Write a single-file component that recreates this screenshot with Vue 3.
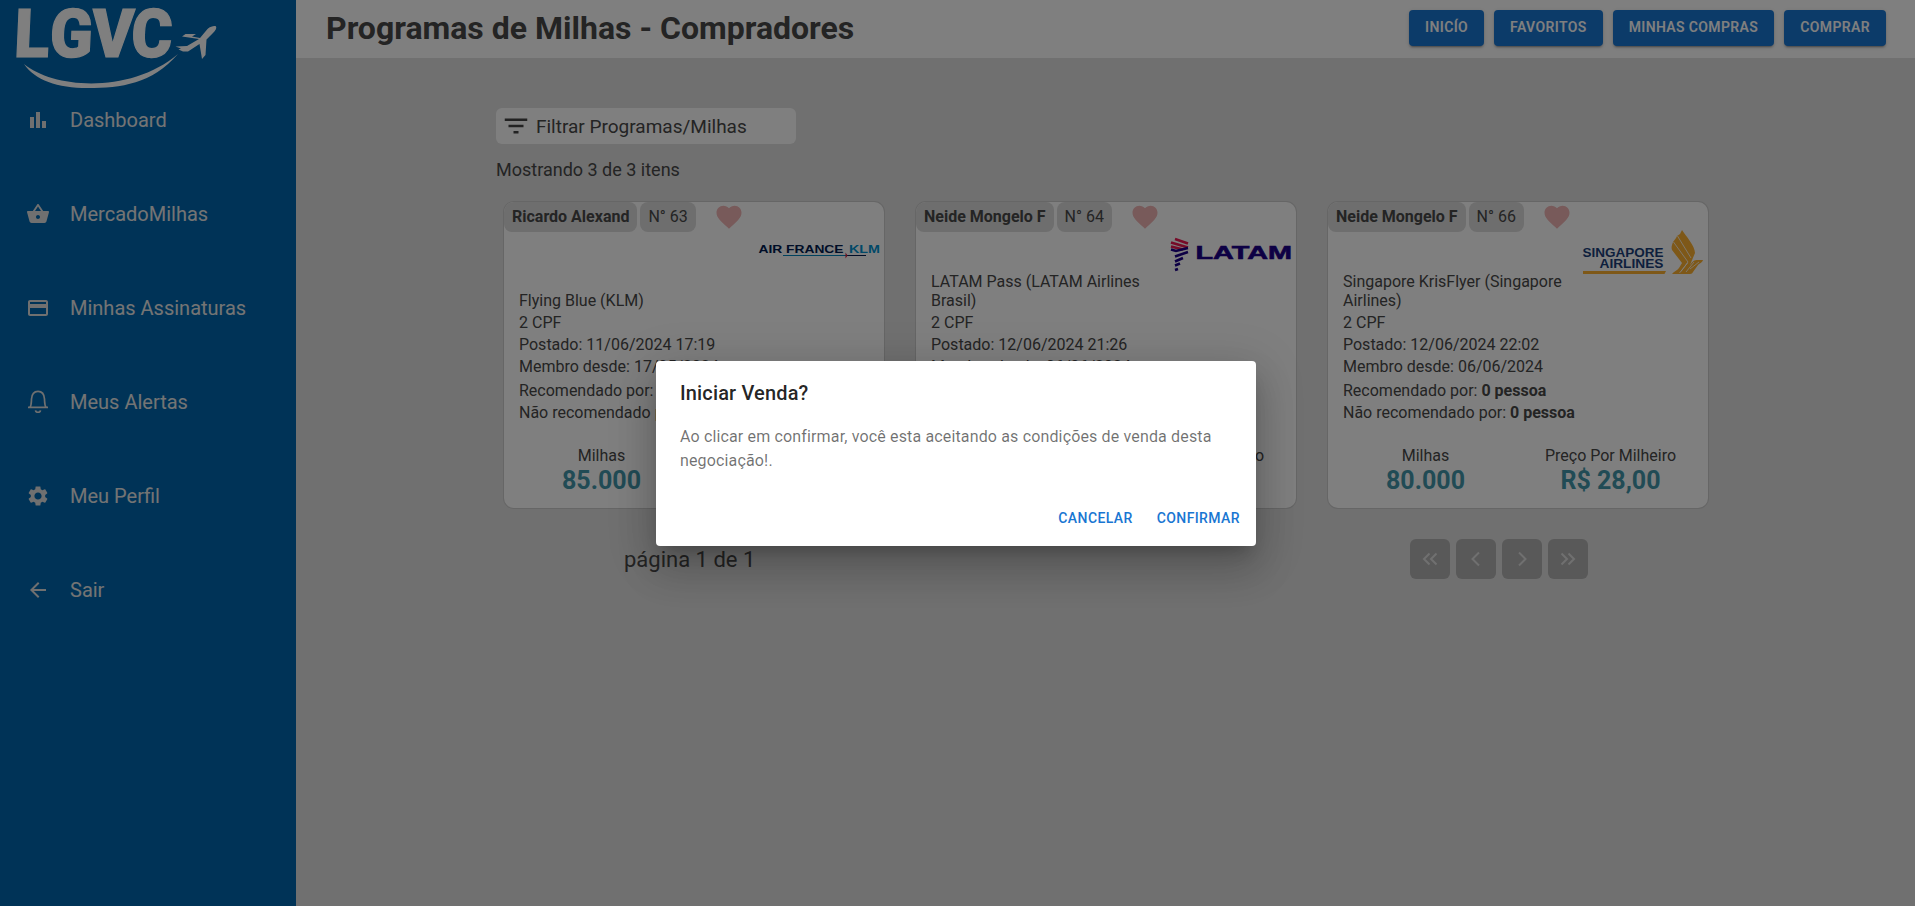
<script setup>
const menu = [
  { label: 'Dashboard', paths: ['M4 9h4v11H4zM16 13h4v7h-4zM10 4h4v16h-4z'] },
  { label: 'MercadoMilhas', paths: ['M17.21 9l-4.38-6.56c-.19-.28-.51-.42-.83-.42-.32 0-.64.14-.83.43L6.79 9H2c-.55 0-1 .45-1 1 0 .09.01.18.04.27l2.54 9.27c.23.84 1 1.46 1.92 1.46h13c.92 0 1.69-.62 1.93-1.46l2.54-9.27L23 10c0-.55-.45-1-1-1h-4.79zM9 9l3-4.4L15 9H9zm3 8c-1.100 0-2-.9-2-2s.9-2 2-2 2 .9 2 2-.9 2-2 2z'] },
  { label: 'Minhas Assinaturas', paths: ['M20 4H4c-1.110 0-1.990.890-1.990 2L2 18c0 1.110.890 2 2 2h16c1.110 0 2-.890 2-2V6c0-1.110-.890-2-2-2zm0 14H4v-6h16v6zm0-10H4V6h16v2z'] },
  { label: 'Meus Alertas', line: true, paths: ['M2 17.300h20M4 17.300c1.500-2 1.300-4.500 1.500-8.300.3-4.700 2.700-7.700 6.500-7.700s6.200 3 6.500 7.700c.2 3.800 0 6.300 1.500 8.300M9.500 20.300c.5 2.600 4.500 2.600 5 0'] },
  { label: 'Meu Perfil', paths: ['M19.140 12.940c.04-.3.060-.61.060-.94 0-.32-.02-.64-.07-.94l2.030-1.580c.18-.14.23-.41.12-.61l-1.920-3.320c-.12-.22-.37-.29-.59-.22l-2.390.96c-.5-.38-1.030-.7-1.620-.94l-.36-2.540c-.04-.24-.24-.41-.48-.41h-3.840c-.24 0-.43.17-.47.41l-.36 2.540c-.59.24-1.130.57-1.620.94l-2.390-.96c-.22-.08-.47 0-.59.22L2.740 8.870c-.12.21-.08.47.12.61l2.030 1.580c-.05.3-.09.63-.09.94s.02.64.07.94l-2.030 1.580c-.18.14-.23.41-.12.61l1.920 3.320c.12.22.37.29.59.22l2.390-.96c.5.38 1.030.7 1.620.94l.36 2.540c.05.24.24.41.48.41h3.840c.24 0 .44-.17.47-.41l.36-2.540c.59-.24 1.130-.56 1.620-.94l2.390.96c.22.08.47 0 .59-.22l1.920-3.320c.12-.22.07-.47-.12-.61l-2.010-1.580zM12 15.600c-1.980 0-3.600-1.620-3.600-3.600s1.620-3.600 3.600-3.600 3.600 1.620 3.600 3.600-1.620 3.600-3.600 3.600z'] },
  { label: 'Sair', paths: ['M20 11H7.830l5.590-5.590L12 4l-8 8 8 8 1.410-1.410L7.830 13H20v-2z'] },
]
const actions = ['INICÍO', 'FAVORITOS', 'MINHAS COMPRAS', 'COMPRAR']
const cards = [
  { logo: 'klm', owner: 'Ricardo Alexand', id: 63, program: 'Flying Blue (KLM)', posted: '11/06/2024 17:19', since: '17/05/2024', miles: '85.000', price: 'R$ 27,00' },
  { logo: 'latam', owner: 'Neide Mongelo F', id: 64, program: 'LATAM Pass (LATAM Airlines Brasil)', posted: '12/06/2024 21:26', since: '06/06/2024', miles: '90.000', price: 'R$ 27,00' },
  { logo: 'singapore', owner: 'Neide Mongelo F', id: 66, program: 'Singapore KrisFlyer (Singapore Airlines)', posted: '12/06/2024 22:02', since: '06/06/2024', miles: '80.000', price: 'R$ 28,00' },
]
const pages = [
  'M11.500 6.500L6 12l5.500 5.500M18.500 6.500L13 12l5.500 5.500',
  'M15 5.500L8.500 12l6.500 6.500',
  'M9 5.500l6.500 6.500L9 18.500',
  'M5.500 6.500L11 12l-5.500 5.500M12.500 6.500L18 12l-5.500 5.500',
]
</script>

<template>
  <div class="app">
    <aside class="sidebar">
      <svg class="brand" width="296" height="92" viewBox="0 0 296 92">
        <g class="brand-name" transform="translate(0 56.500) skewX(-2.500)">
          <text x="13.500" y="0" textLength="35" lengthAdjust="spacingAndGlyphs">L</text>
          <text x="49" y="0" textLength="43" lengthAdjust="spacingAndGlyphs">G</text>
          <text x="91" y="0" textLength="42" lengthAdjust="spacingAndGlyphs">V</text>
          <text x="130.500" y="0" textLength="41" lengthAdjust="spacingAndGlyphs">C</text>
        </g>
        <path d="M24 64C54 89 131 94 178 54C152 84 121 88 88 88C57 88 35 80 24 64Z" />
        <path d="M175.500 46.500L187 46L199 39L182 36.500L185.500 34L196 34L192 36.500L200 38L207.500 29C211 26 215 25.500 216 26.500C217 28.500 215 31 213 33L206.500 39.500L205.500 55L202 59L199.500 44L188 51.500L183 51.500L178.500 49.500L181 48.500Z" />
      </svg>
      <nav class="menu">
        <a v-for="item in menu" :key="item.label" class="menu-item">
          <svg :class="{ line: item.line }" width="24" height="24" viewBox="0 0 24 24"><path v-for="p in item.paths" :key="p" :d="p" /></svg>
          <span>{{ item.label }}</span>
        </a>
      </nav>
    </aside>

    <div class="page">
      <header class="topbar">
        <h1>Programas de Milhas - Compradores</h1>
        <div class="actions"><button v-for="a in actions" :key="a">{{ a }}</button></div>
      </header>

      <main class="content">
        <div class="filter">
          <svg width="30" height="30" viewBox="0 0 24 24"><path d="M10 18h4v-2h-4v2zM3 6v2h18V6H3zm3 7h12v-2H6v2z" /></svg>
          <span>Filtrar Programas/Milhas</span>
        </div>
        <p class="count">Mostrando 3 de 3 itens</p>

        <div class="cards">
          <article v-for="c in cards" :key="c.id" class="card">
            <div class="tags">
              <b class="tag">{{ c.owner }}</b>
              <span class="tag">N° {{ c.id }}</span>
              <svg class="heart" width="30" height="30" viewBox="0 0 24 24"><path d="M12 21.350l-1.450-1.320C5.400 15.360 2 12.280 2 8.500 2 5.420 4.420 3 7.500 3c1.740 0 3.410.810 4.500 2.090C13.090 3.810 14.760 3 16.500 3 19.580 3 22 5.420 22 8.500c0 3.780-3.400 6.860-8.550 11.540L12 21.350z" /></svg>
            </div>
            <div class="program">
              <p>{{ c.program }}</p>
              <svg v-if="c.logo === 'klm'" class="logo" width="130" height="50" viewBox="0 0 130 50">
                <g class="klm" font-size="10.800">
                  <text x="6.500" y="23.500" textLength="85" lengthAdjust="spacingAndGlyphs" fill="#001a4f">AIR FRANCE</text>
                  <text x="97" y="23.500" textLength="31" lengthAdjust="spacingAndGlyphs" fill="#0092d0">KLM</text>
                </g>
                <path d="M31 26.500h64" stroke="#0084bd" stroke-width="1" /><path d="M95 26.500h19" stroke="#001a4f" stroke-width="1" />
                <path d="M93.500 23.500l2 3-2 3z" fill="#d01838" />
              </svg>
              <svg v-else-if="c.logo === 'latam'" class="logo" width="130" height="50" viewBox="0 0 130 50">
                <g fill="none" stroke-width="2.600">
                  <path d="M11 10l13 4.500M7 13.500l17 5M7 17.500l12 3" stroke="#ed1650" />
                  <path d="M7 20.500l5 1.500L24 19M11 27.500l13-4.500M11 32.500l8-3.500M11 36.500l5-2M11 41l3-1" stroke="#1b0088" />
                </g>
                <text class="latam" x="31.500" y="30" textLength="96.500" lengthAdjust="spacingAndGlyphs" font-size="19">LATAM</text>
              </svg>
              <svg v-else class="logo" width="130" height="50" viewBox="0 0 130 50">
                <g class="singapore" font-size="13">
                  <text x="6.500" y="27.500" textLength="81" lengthAdjust="spacingAndGlyphs">SINGAPORE</text>
                  <text x="23.500" y="39.200" textLength="64" lengthAdjust="spacingAndGlyphs">AIRLINES</text>
                </g>
                <path d="M7 42h83l-1.500 3H7z" fill="#fcb130" />
                <path d="M106 1C110 7 119 17 119 24L114 36C117 32 118 31 122 31H127C126 34 124 34 122 36L117 43C116 45 115 45 112 45H96C98 42 101 42 103 39L106 34L96 21C95 18 96 16 97 13L100 9L101 7L104 5Z" fill="#fcb130" />
                <path d="M97.500 13L112 33L105 42.500M101.500 7L115 29M111.500 34L103.500 44M118 33L110 43M114 40L123 33" fill="none" stroke="#fff" stroke-width=".8" />
              </svg>
            </div>
            <p class="row">2 CPF</p>
            <p class="row">Postado: {{ c.posted }}</p>
            <p class="row">Membro desde: {{ c.since }}</p>
            <p class="row spaced">Recomendado por: <b>0 pessoa</b></p>
            <p class="row">Não recomendado por: <b>0 pessoa</b></p>
            <div class="figures">
              <div><span>Milhas</span><strong>{{ c.miles }}</strong></div>
              <div><span>Preço Por Milheiro</span><strong>{{ c.price }}</strong></div>
            </div>
          </article>
        </div>

        <footer class="pager">
          <span>página 1 de 1</span>
          <div class="pager-buttons">
            <button v-for="p in pages" :key="p"><svg width="24" height="24" viewBox="0 0 24 24"><path :d="p" /></svg></button>
          </div>
        </footer>
      </main>
    </div>

    <div class="backdrop">
      <section class="dialog" role="dialog">
        <h2>Iniciar Venda?</h2>
        <p>Ao clicar em confirmar, você esta aceitando as condições de venda desta negociação!.</p>
        <div class="dialog-actions"><button>CANCELAR</button><button>CONFIRMAR</button></div>
      </section>
    </div>
  </div>
</template>

<style>
body { margin: 0; overflow: hidden; }
</style>

<style scoped>
* { box-sizing: border-box; }
p, h1, h2 { margin: 0; }
button { border: 0; font-family: inherit; }
.app { position: relative; display: flex; width: 100vw; height: 100vh; overflow: hidden; font-family: Roboto, "Liberation Sans", sans-serif; color: #484848; background: #e0e0e0; }
.sidebar { width: 296px; flex: none; background: #0066ae; }
.brand { display: block; fill: #fff; }
.brand-name { font-size: 67.500px; font-weight: 900; stroke: #fff; stroke-width: 1.200; }
.menu { display: flex; flex-direction: column; gap: 38px; }
.menu-item { display: flex; align-items: center; gap: 20px; height: 56px; padding-left: 26px; font-size: 20px; color: #e9e9e9; }
.menu-item svg { fill: #e0e0e0; }
.menu-item svg.line { fill: none; stroke: #e0e0e0; stroke-width: 1.700; }
.page { flex: 1; min-width: 0; }
.topbar { display: flex; justify-content: space-between; height: 58px; padding: 0 29px 0 30px; background: #fff; }
h1 { font-size: 32px; line-height: 56px; font-weight: 700; }
.actions { display: flex; gap: 10px; padding-top: 10px; }
.actions button { height: 36px; padding: 0 16px 2px; border-radius: 4px; background: #1976d2; color: #fff; font-size: 14px; font-weight: 600; letter-spacing: .370px; box-shadow: 0 3px 1px -2px rgba(0,0,0,.2), 0 2px 2px rgba(0,0,0,.14), 0 1px 5px rgba(0,0,0,.12); }
.content { width: 1220px; margin: 50px 0 0 200px; }
.filter { display: flex; align-items: center; gap: 5px; width: 300px; height: 36px; padding-left: 5px; border-radius: 6px; background: #fff; font-size: 19px; }
.filter svg { fill: #444; }
.count { margin-top: 15px; font-size: 18px; line-height: 22px; }
.cards { display: flex; gap: 32px; padding: 0 8px; margin-top: 21px; }
.card { width: 380px; height: 306px; border-radius: 10px; background: #fff; box-shadow: 0 0 0 1px #ccc; overflow: hidden; font-size: 16px; line-height: 19px; }
.tags { display: flex; gap: 3px; height: 30px; }
.tag { padding: 0 8px; line-height: 29px; border-radius: 8px; background: #dcdcdc; }
.heart { margin-left: 15px; fill: #f0b4b4; }
.program { display: flex; align-items: flex-end; justify-content: space-between; height: 78px; padding: 0 2px 0 15px; }
.program p { width: 225px; }
.logo { align-self: flex-start; margin-top: -3px; flex: none; }
.klm, .latam, .singapore { font-family: "Liberation Sans", sans-serif; font-weight: 700; }
.latam { fill: #1b0088; stroke: #1b0088; stroke-width: .6; }
.singapore { fill: #1b3f7a; }
.row { margin: 3px 0 0 15px; }
.row.spaced { margin-top: 5px; }
.figures { display: flex; padding: 0 5px; margin-top: 24px; }
.figures div { display: flex; flex: 1; flex-direction: column; align-items: center; }
.figures strong { margin-top: 1px; font-size: 25px; line-height: 29px; color: #4397ab; }
.pager { display: flex; justify-content: space-between; align-items: center; height: 40px; margin-top: 31px; padding: 0 128px; font-size: 22px; }
.pager-buttons { display: flex; gap: 6px; }
.pager-buttons button { display: flex; align-items: center; justify-content: center; width: 40px; height: 40px; padding: 0; border-radius: 6px; background: #b2b2b2; }
.pager-buttons svg { fill: none; stroke: #e0e0e0; stroke-width: 2; }
.backdrop { position: absolute; inset: 0; display: flex; align-items: center; justify-content: center; padding-right: 3px; background: rgba(0,0,0,.5); }
.dialog { width: 600px; height: 185px; border-radius: 4px; background: #fff; box-shadow: 0 11px 15px -7px rgba(0,0,0,.2), 0 24px 38px 3px rgba(0,0,0,.14), 0 9px 46px 8px rgba(0,0,0,.12); }
h2 { padding: 16px 24px; font-size: 20px; font-weight: 500; line-height: 32px; letter-spacing: .15px; color: rgba(0,0,0,.87); }
.dialog p { padding: 0 24px 20px; font-size: 16px; line-height: 24px; letter-spacing: .15px; color: rgba(0,0,0,.56); }
.dialog-actions { display: flex; justify-content: flex-end; gap: 8px; padding: 8px; }
.dialog-actions button { padding: 5px 8px 7px; background: none; color: #1976d2; font-size: 14px; font-weight: 500; line-height: 24px; letter-spacing: .4px; }
</style>
